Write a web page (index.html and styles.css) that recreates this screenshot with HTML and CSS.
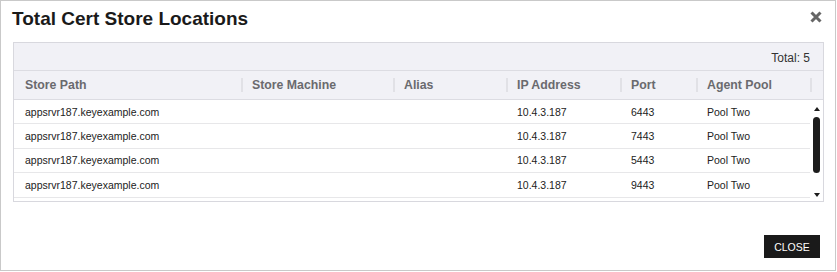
FILE: index.html
```html
<!DOCTYPE html>
<html lang="en">
<head>
  <meta charset="UTF-8" />
  <title>Total Cert Store Locations</title>
  <link rel="stylesheet" href="styles.css">
</head>
<body>
  <div class="modal">
    <div class="modal-header">
      <h2>Total Cert Store Locations</h2>
      <button class="close-x" title="Close">
        <svg width="12" height="12" viewBox="0 0 12 12">
          <path d="M1.5 1.5 L10.5 10.5 M10.5 1.5 L1.5 10.5" stroke="#666" stroke-width="3" fill="none"/>
        </svg>
      </button>
    </div>

    <div class="grid">
      <div class="grid-toolbar">Total: 5</div>

      <div class="grid-head">
        <div class="th">Store Path</div>
        <div class="th">Store Machine</div>
        <div class="th">Alias</div>
        <div class="th">IP Address</div>
        <div class="th">Port</div>
        <div class="th">Agent Pool</div>
        <div class="th"></div>
      </div>

      <div class="grid-body">
        <div class="rows">
          <div class="row">
            <div class="td">appsrvr187.keyexample.com</div><div class="td"></div><div class="td"></div>
            <div class="td">10.4.3.187</div><div class="td">6443</div><div class="td">Pool Two</div>
          </div>
          <div class="row">
            <div class="td">appsrvr187.keyexample.com</div><div class="td"></div><div class="td"></div>
            <div class="td">10.4.3.187</div><div class="td">7443</div><div class="td">Pool Two</div>
          </div>
          <div class="row">
            <div class="td">appsrvr187.keyexample.com</div><div class="td"></div><div class="td"></div>
            <div class="td">10.4.3.187</div><div class="td">5443</div><div class="td">Pool Two</div>
          </div>
          <div class="row">
            <div class="td">appsrvr187.keyexample.com</div><div class="td"></div><div class="td"></div>
            <div class="td">10.4.3.187</div><div class="td">9443</div><div class="td">Pool Two</div>
          </div>
        </div>
        <div class="scrollbar">
          <span class="arrow up"></span>
          <span class="thumb"></span>
          <span class="arrow down"></span>
        </div>
      </div>
    </div>

    <div class="modal-footer">
      <button class="close-btn">CLOSE</button>
    </div>
  </div>
</body>
</html>
```

FILE: styles.css
```css
body {
  margin: 0;
  font-family: "Liberation Sans", Arial, sans-serif;
  background-color: #fff;
  color: #222;
}

.modal {
  width: 836px;
  height: 271px;
  box-sizing: border-box;
  border: 1px solid #c9c9c9;
  background-color: #fff;
}

.modal-header {
  display: flex;
  justify-content: space-between;
  align-items: flex-start;
  padding: 6px 13px 0 11px;
}

.modal-header h2 {
  margin: 0;
  font-size: 19px;
  line-height: 24px;
  font-weight: 700;
  color: #1a1a1a;
}

.close-x {
  border: none;
  background: none;
  padding: 0;
  margin-top: 4px;
  width: 12px;
  height: 12px;
  cursor: pointer;
}

.close-x svg {
  display: block;
}

/* grid */
.grid {
  margin: 11px 11px 0 12px;
  border: 1px solid #d8d8de;
}

.grid-toolbar {
  height: 28px;
  box-sizing: border-box;
  padding: 8px 13px 0 0;
  text-align: right;
  font-size: 12px;
  color: #333;
  background-color: #f1f1f6;
  border-bottom: 1px solid #dcdce2;
}

.grid-head {
  display: grid;
  grid-template-columns: 227px 152px 113px 114px 76px 114px 13px;
  height: 29px;
  box-sizing: border-box;
  background-color: #f1f1f6;
  border-bottom: 1px solid #dcdce2;
}

.th {
  position: relative;
  display: flex;
  align-items: center;
  padding-left: 11px;
  font-size: 12.3px;
  font-weight: 700;
  color: #6a6a6e;
  white-space: nowrap;
}

.th + .th::before {
  content: "";
  position: absolute;
  left: 0;
  top: 7px;
  width: 2px;
  height: 14px;
  background-color: #e1e1e6;
}

.grid-body {
  display: flex;
  height: 101px;
  overflow: hidden;
}

.rows {
  width: 796px;
}

.row {
  display: grid;
  grid-template-columns: 227px 152px 113px 114px 76px 114px;
  height: 24.4px;
  box-sizing: border-box;
  border-bottom: 1px solid #e7e7e9;
}

.td {
  display: flex;
  align-items: center;
  padding-left: 11px;
  font-size: 10.5px;
  color: #222;
  white-space: nowrap;
}

.scrollbar {
  width: 13px;
  display: flex;
  flex-direction: column;
  align-items: center;
  padding-top: 7px;
  box-sizing: border-box;
}

.arrow {
  width: 0;
  height: 0;
  border-left: 3.5px solid transparent;
  border-right: 3.5px solid transparent;
}

.arrow.up {
  border-bottom: 4px solid #1c1c1c;
}

.arrow.down {
  margin-top: 20px;
  border-top: 4px solid #1c1c1c;
}

.thumb {
  margin-top: 6px;
  width: 7px;
  height: 56px;
  border-radius: 4px;
  background-color: #1c1c1c;
}

.modal-footer {
  display: flex;
  justify-content: flex-end;
  padding: 33px 15px 0 0;
}

.close-btn {
  width: 56px;
  height: 23px;
  padding: 0;
  border: none;
  border-radius: 0;
  background-color: #1a1a1a;
  color: #fff;
  font-family: "Liberation Sans", Arial, sans-serif;
  font-size: 10.5px;
  cursor: pointer;
}
```
